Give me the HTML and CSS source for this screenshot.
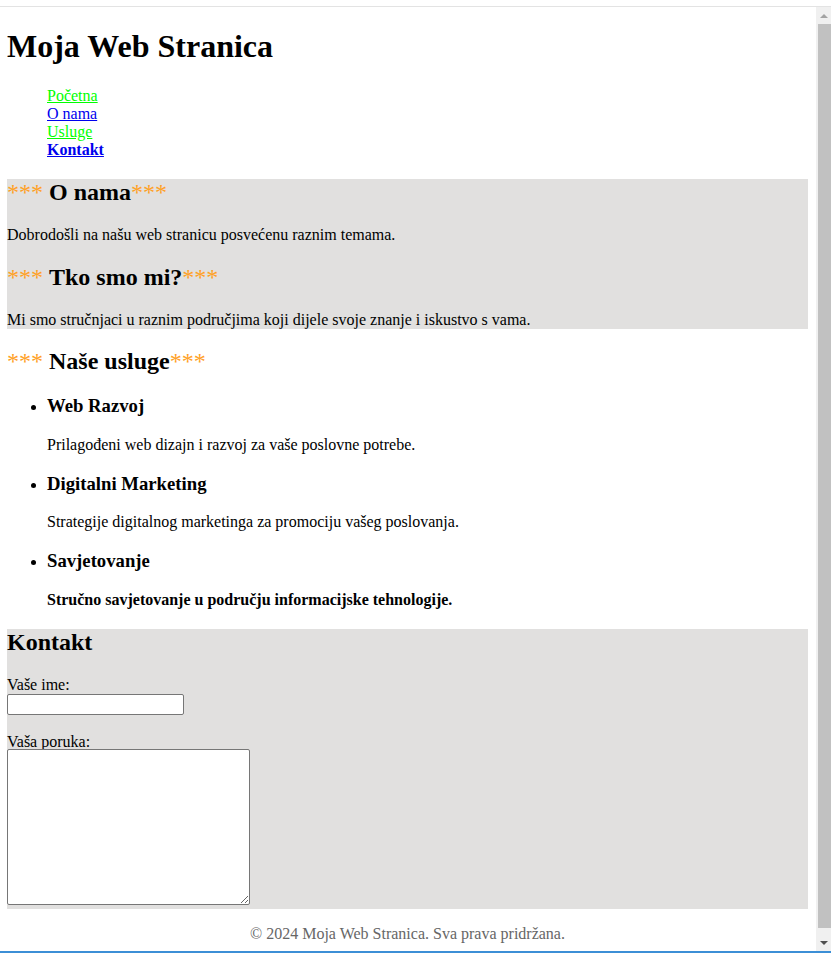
FILE: index.html
```html
<!DOCTYPE html>
<html lang="hr">
<head>
<meta charset="utf-8">
<title>Moja Web Stranica</title>
<link rel="stylesheet" href="styles.css">
</head>
<body>
<div class="page">
  <header>
    <h1>Moja Web Stranica</h1>
    <nav>
      <ul class="nav">
        <li><a class="visited" href="#pocetna">Početna</a></li>
        <li><a href="#o-nama">O nama</a></li>
        <li><a class="visited" href="#usluge">Usluge</a></li>
        <li><a class="strong" href="#kontakt">Kontakt</a></li>
      </ul>
    </nav>
  </header>
  <main>
    <section id="o-nama" class="box">
      <h2 class="star">O nama</h2>
      <p>Dobrodošli na našu web stranicu posvećenu raznim temama.</p>
      <h2 class="star">Tko smo mi?</h2>
      <p>Mi smo stručnjaci u raznim područjima koji dijele svoje znanje i iskustvo s vama.</p>
    </section>
    <section id="usluge">
      <h2 class="star">Naše usluge</h2>
      <ul class="services">
        <li>
          <h3>Web Razvoj</h3>
          <p>Prilagođeni web dizajn i razvoj za vaše poslovne potrebe.</p>
        </li>
        <li>
          <h3>Digitalni Marketing</h3>
          <p>Strategije digitalnog marketinga za promociju vašeg poslovanja.</p>
        </li>
        <li>
          <h3>Savjetovanje</h3>
          <p><strong>Stručno savjetovanje u području informacijske tehnologije.</strong></p>
        </li>
      </ul>
    </section>
    <section id="kontakt" class="box">
      <h2>Kontakt</h2>
      <form class="form">
        <label for="ime">Vaše ime:</label><br>
        <input type="text" id="ime" class="field"><br><br>
        <label for="poruka">Vaša poruka:</label><br>
        <textarea id="poruka" class="area"></textarea>
      </form>
    </section>
  </main>
  <footer class="footer">
    <p>© 2024 Moja Web Stranica. Sva prava pridržana.</p>
  </footer>
</div>
<div class="scrollbar">
  <div class="sb-arrow sb-up"></div>
  <div class="sb-thumb"></div>
  <div class="sb-arrow sb-down"></div>
</div>
<div class="bottom-line"></div>
</body>
</html>
```

FILE: styles.css
```css
html {
  overflow: hidden;
}

body {
  margin: 6px 0 0 0;
  border-top: 1px solid #e3e3e3;
  font-family: "Liberation Serif", "Times New Roman", serif;
  font-size: 16px;
  color: #000;
  background: #fff;
}

.page {
  margin: 0 23px 0 7px;
}

h1 {
  font-size: 32px;
  margin: 21.44px 0;
}

h2 {
  font-size: 24px;
  margin: 19.92px 0;
}

h3 {
  font-size: 18.72px;
  margin: 18.72px 0;
}

p {
  margin: 16px 0;
}

.nav {
  list-style: none;
  margin: 16px 0;
  padding-left: 40px;
}

.nav a {
  color: #0000ee;
}

.nav a.visited {
  color: #00ff00;
}

.nav a.strong {
  font-weight: bold;
}

.box {
  background: #e1e0df;
}

.star::before {
  content: "*** ";
  color: #ffa126;
  font-weight: normal;
}

.star::after {
  content: "***";
  color: #ffa126;
  font-weight: normal;
}

.services {
  margin: 16px 0;
  padding-left: 40px;
  list-style: disc;
}

.field {
  width: 177px;
  height: 21px;
  box-sizing: border-box;
  margin: 0;
  border: 1px solid #767676;
  border-radius: 2px;
  background: #fff;
}

.area {
  width: 243px;
  height: 156px;
  box-sizing: border-box;
  margin: -2px 0 0 0;
  border: 1px solid #767676;
  border-radius: 2px;
  background: #fff;
  vertical-align: baseline;
}

.footer {
  text-align: center;
  color: #666;
}

.scrollbar {
  position: fixed;
  top: 7px;
  right: 0;
  bottom: 2px;
  width: 15px;
  background: #f0f0f0;
  display: flex;
  flex-direction: column;
}

.sb-arrow {
  height: 17px;
  display: flex;
  align-items: center;
  justify-content: center;
}

.sb-up::before {
  content: "";
  border-left: 4px solid transparent;
  border-right: 4px solid transparent;
  border-bottom: 4px solid #a3a3a3;
}

.sb-down::before {
  content: "";
  border-left: 4px solid transparent;
  border-right: 4px solid transparent;
  border-top: 4px solid #505050;
}

.sb-thumb {
  flex: 1;
  margin: 0 0 6px 2px;
  background: #c1c1c1;
}

.bottom-line {
  position: fixed;
  left: 0;
  right: 0;
  bottom: 0;
  height: 2px;
  background: #3c8fd6;
}
```
